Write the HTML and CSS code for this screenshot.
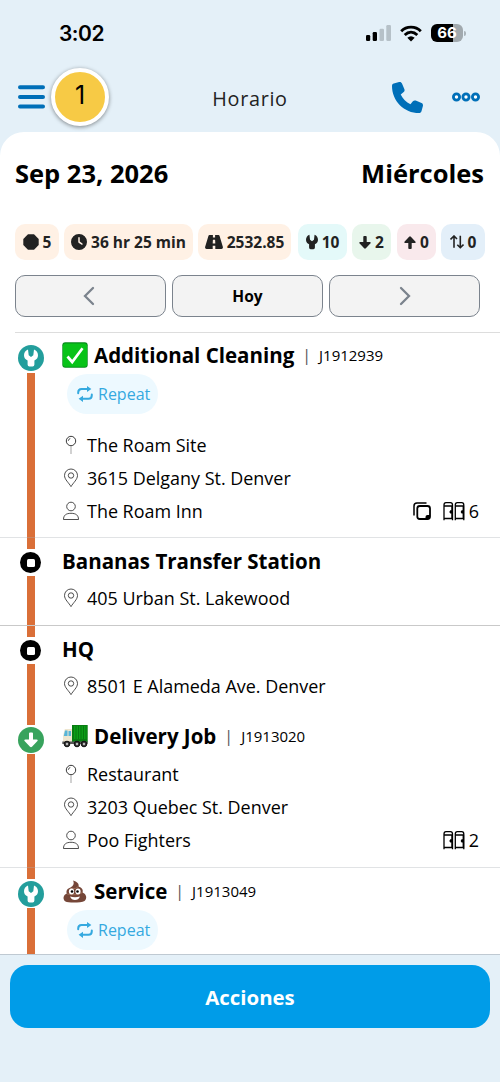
FILE: index.html
```html
<!DOCTYPE html>
<html lang="es">
<head>
<meta charset="utf-8">
<title>Horario</title>
<link rel="stylesheet" href="styles.css">
</head>
<body>
<svg class="defs" width="0" height="0" aria-hidden="true">
  <symbol id="wrench" viewBox="0 0 14 18"><path d="M4 .6 4.700 6.300 7 8 9.300 6.300 10 .6C12.600 1.600 14 3.900 14 6.300 14 8.800 12.700 10.500 10.400 11.600V15.500Q10.400 17.500 8.600 17.500H5.400Q3.600 17.500 3.600 15.500V11.600C1.300 10.500 0 8.800 0 6.300 0 3.900 1.400 1.600 4 .6Z"/></symbol>
  <symbol id="down" viewBox="0 0 14 16"><path d="M5 1.500Q5 .5 6 .5H8Q9 .5 9 1.500V7.500H12.500Q14.500 7.600 13.200 9.300L8 14.800Q7 15.700 6 14.800L.8 9.300Q-.5 7.600 1.500 7.500H5Z"/></symbol>
  <symbol id="pin" viewBox="0 0 16 20"><g fill="none" stroke="#222" stroke-width=".9"><circle cx="8" cy="6" r="4.700"/><path d="M5.300 5.800Q5.500 3.900 7.300 3.500" stroke-width=".8"/><path d="M8 10.800V19" stroke="#999"/></g></symbol>
  <symbol id="place" viewBox="0 0 16 20"><g fill="none" stroke="#222" stroke-width=".8"><path d="M8 18.600C6 15 1.500 11.500 1.500 7.500A6.500 6.500 0 0 1 14.500 7.500C14.500 11.500 10 15 8 18.600Z"/><circle cx="8" cy="7.500" r="2.700"/></g></symbol>
  <symbol id="person" viewBox="0 0 16 20"><g fill="none" stroke="#222" stroke-width=".8"><circle cx="8" cy="5.500" r="4.300"/><path d="M.5 18.500C.5 14.300 3 12.300 8 12.300S15.500 14.300 15.500 18.500Z"/></g></symbol>
  <symbol id="repeat" viewBox="0 0 16 16"><g fill="none" stroke="currentColor" stroke-width="2" stroke-linecap="round"><path d="M1.200 7.300V6.500Q1.200 3 4.500 3H11"/><path d="M14.800 8.500V9.300Q14.800 12.800 11.500 12.800H5"/></g><path fill="currentColor" d="M10 0 14.400 3 10 6ZM6 9.800 1.600 12.800 6 15.900Z"/></symbol>
  <symbol id="units" viewBox="0 0 22 20"><g id="unit"><path fill="none" stroke="#000" stroke-width="1.300" d="M1 19.200V4Q1 1.600 3 1.600H7.500Q9.500 1.600 9.500 4V19.200M1 5H9.500M1 17.500H9.500"/><path d="M7.300 9.200H9V12.600H7.300L6.300 10.900ZM8.300 5H9.800V18H8.300Z"/></g><use href="#unit" x="11.300"/></symbol>
</svg>

<div class="screen">
  <header class="top">
    <div class="status">
      <span class="time">3:02</span>
      <svg class="signal" width="26" height="18" viewBox="0 0 26 18"><rect x="0" y="11" width="4.200" height="6" rx="1.200"/><rect x="6.700" y="8" width="4.300" height="9" rx="1.200"/><g fill="#b6c1c8"><rect x="13.500" y="4.700" width="4.500" height="12.300" rx="1.200"/><rect x="20.300" y="1" width="4.700" height="16" rx="1.200"/></g></svg>
      <svg class="wifi" width="22" height="17" viewBox="0 0 22 17"><g fill="none" stroke="#000" stroke-width="2.800"><path d="M1.200 6.200C6.500.8 15.500.8 20.800 6.200"/><path d="M4.700 10C8.500 6.300 13.500 6.300 17.300 10"/></g><path d="M7.300 12.800Q11 9.800 14.700 12.800L11 16.500Z"/></svg>
      <span class="battery">66</span><i class="nub"></i>
    </div>
    <nav class="nav">
      <svg class="menu" width="27" height="24" viewBox="0 0 27 24"><path d="M2 2.300H25M2 12H25M2 21.500H25" stroke="#006fb8" stroke-width="4" stroke-linecap="round"/></svg>
      <span class="count">1</span>
      <h1>Horario</h1>
      <svg class="phone" width="31" height="31" viewBox="0 0 512 512"><path fill="#006fb8" d="M164.900 24.600c-7.700-18.600-28-28.500-47.400-23.200l-88 24C12.100 30.200 0 46 0 64C0 311.400 200.600 512 448 512c18 0 33.800-12.100 38.600-29.500l24-88c5.300-19.400-4.600-39.700-23.200-47.400l-96-40c-16.300-6.800-35.200-2.100-46.300 11.600L304.700 368C234.300 334.700 177.300 277.700 144 207.300L193.300 167c13.700-11.200 18.400-30 11.600-46.300l-40-96z"/></svg>
      <svg class="more" width="28" height="10" viewBox="0 0 28 10"><g fill="#fff" stroke="#006fb8" stroke-width="2.800"><circle cx="4.500" cy="5" r="3.100"/><circle cx="14" cy="5" r="3.100"/><circle cx="23.500" cy="5" r="3.100"/></g></svg>
    </nav>
  </header>

  <main class="panel">
    <div class="date"><span>Sep 23, 2026</span><span>Miércoles</span></div>
    <div class="chips">
      <span class="chip c-stops"><svg width="16" height="16" viewBox="0 0 16 16"><path d="M5 .3H11L15.700 5V11L11 15.700H5L.3 11V5Z"/></svg>5</span>
      <span class="chip c-time"><svg width="16" height="16" viewBox="0 0 512 512"><path fill-rule="evenodd" d="M256 0a256 256 0 1 1 0 512A256 256 0 1 1 256 0zM232 120V256c0 8 4 15.500 10.700 20l96 64c11 7.400 25.900 4.400 33.300-6.700s4.400-25.900-6.700-33.300L280 243.200V120c0-13.300-10.700-24-24-24s-24 10.700-24 24z"/></svg>36 hr 25 min</span>
      <span class="chip c-road"><svg width="18" height="16" viewBox="0 0 18 16"><path fill-rule="evenodd" d="M4.500 1H7.900V3.500H10.100V1H13.500Q14.300 1 14.600 2L17.900 13Q18.200 15 16.500 15H10.300V11.800H7.700V15H1.500Q-.2 15 .1 13L3.400 2Q3.700 1 4.500 1ZM7.900 5.800 7.700 9.500H10.300L10.100 5.800Z"/></svg>2532.85</span>
      <span class="chip c-service"><svg width="12" height="16"><use href="#wrench"/></svg>10</span>
      <span class="chip c-down"><svg width="12" height="15"><use href="#down"/></svg>2</span>
      <span class="chip c-up"><svg class="flip" width="12" height="15"><use href="#down"/></svg>0</span>
      <span class="chip c-swap"><svg width="14" height="14" viewBox="0 0 14 14"><path fill="none" stroke="#222" stroke-width="1.600" d="M.5 4.500 4 1 7 4M4 1V12.700M7.300 9.700 10.300 12.700 13.500 9.500M10.300 12.700V.8"/></svg>0</span>
    </div>
    <div class="days">
      <button><svg class="prev" width="12" height="20" viewBox="0 0 12 20"><path d="M10 2 2 10 10 18"/></svg></button>
      <button>Hoy</button>
      <button><svg width="12" height="20" viewBox="0 0 12 20"><path d="M2 2 10 10 2 18"/></svg></button>
    </div>

    <section class="stops">
      <article class="stop first line">
        <div class="rail"><i class="seg lead"></i><span class="dot teal"><svg width="14" height="18"><use href="#wrench"/></svg></span><i class="seg"></i></div>
        <div class="body">
          <h2><svg class="emoji" width="26" height="26" viewBox="0 0 26 26"><rect x=".3" y=".3" width="25.400" height="25.400" rx="3" fill="#078c1b"/><rect x="1" y="1.500" width="24" height="23.200" rx="2.500" fill="#08c318"/><path d="M5.500 14.500 10.200 20 20.500 6.300" fill="none" stroke="#fff" stroke-width="2.700"/></svg>Additional Cleaning<span class="bar">|</span><small>J1912939</small></h2>
          <span class="tag"><svg width="16" height="16"><use href="#repeat"/></svg>Repeat</span>
          <p><svg width="16" height="20"><use href="#pin"/></svg>The Roam Site</p>
          <p><svg width="16" height="20"><use href="#place"/></svg>3615 Delgany St. Denver</p>
          <p><svg width="16" height="20"><use href="#person"/></svg>The Roam Inn<span class="qty"><svg class="copy" width="18" height="18" viewBox="0 0 18 18"><g fill="none" stroke="#000" stroke-width="1.500"><path d="M1 13.500V4Q1 1 4 1H13.500"/><rect x="4.300" y="4" width="12.700" height="13" rx="2.500" stroke-width="1.800"/></g><path d="M12.500 17V15Q12.500 13 14.500 13H17V15.500L15.500 17Z"/></svg><svg width="22" height="20"><use href="#units"/></svg>6</span></p>
        </div>
      </article>
      <article class="stop line strong">
        <div class="rail"><i class="seg lead"></i><span class="dot small"><i></i></span><i class="seg"></i></div>
        <div class="body"><h2>Bananas Transfer Station</h2><p><svg width="16" height="20"><use href="#place"/></svg>405 Urban St. Lakewood</p></div>
      </article>
      <article class="stop">
        <div class="rail"><i class="seg lead"></i><span class="dot small"><i></i></span><i class="seg"></i></div>
        <div class="body"><h2>HQ</h2><p><svg width="16" height="20"><use href="#place"/></svg>8501 E Alameda Ave. Denver</p></div>
      </article>
      <article class="stop delivery line">
        <div class="rail"><i class="seg lead"></i><span class="dot green"><svg width="14" height="16"><use href="#down"/></svg></span><i class="seg"></i></div>
        <div class="body">
          <h2><svg class="emoji" width="26" height="24" viewBox="0 0 26 24"><path fill="#087d12" d="M10 1H25.700V18.500H10Z"/><path fill="#0b9d17" d="M12 2H25V15H12Z"/><path d="M14 2V15M16.500 2V15M19 2V15M21.500 2V15M24 2V15" stroke="#056a0d" stroke-width=".7"/><path fill="#eee6cf" d="M2.800 5H10V19H1V12Z"/><path fill="#58b5d8" d="M3 6.500H5.500V12H1.800ZM6.500 7H9V12H6.500Z"/><path fill="#555" d="M.3 17.500H25.700V20H.3Z"/><g fill="#333" stroke="#111"><circle cx="5" cy="20" r="2.800"/><circle cx="15" cy="20" r="2.800"/><circle cx="22" cy="20" r="2.800"/></g><g fill="#bbb"><circle cx="5" cy="20" r="1.200"/><circle cx="15" cy="20" r="1.200"/><circle cx="22" cy="20" r="1.200"/></g></svg>Delivery Job<span class="bar">|</span><small>J1913020</small></h2>
          <p><svg width="16" height="20"><use href="#pin"/></svg>Restaurant</p>
          <p><svg width="16" height="20"><use href="#place"/></svg>3203 Quebec St. Denver</p>
          <p><svg width="16" height="20"><use href="#person"/></svg>Poo Fighters<span class="qty"><svg width="22" height="20"><use href="#units"/></svg>2</span></p>
        </div>
      </article>
      <article class="stop">
        <div class="rail"><i class="seg lead"></i><span class="dot teal"><svg width="14" height="18"><use href="#wrench"/></svg></span><i class="seg"></i></div>
        <div class="body">
          <h2><svg class="emoji" width="26" height="26" viewBox="0 0 26 26"><path fill="#754638" d="M11 2.500C15 3.500 17.500 6 16.500 8.500 20 9.500 21.500 12 20.500 14.500 24.500 16 25.500 20.500 22.500 23 19 25 6 25 3.500 23.500.5 21.500 1 17 4.800 15.500 3.800 12.500 5.500 10.500 8.500 9.500 11.500 8 12.500 5 11 2.500Z"/><path d="M8.500 10.500Q14 11.500 16.500 8.500M5 16Q14 18 20.500 14.500" stroke="#9b6b55" fill="none"/><ellipse cx="9.500" cy="13.500" rx="2.600" ry="3" fill="#fff"/><ellipse cx="16" cy="13.500" rx="2.600" ry="3" fill="#fff"/><circle cx="10" cy="13.500" r="1.300"/><circle cx="15.500" cy="13.500" r="1.300"/><path d="M8 18.500Q13 20 18 18.500 16.500 22 13 22T8 18.500Z" fill="#fff"/></svg>Service<span class="bar">|</span><small>J1913049</small></h2>
          <span class="tag"><svg width="16" height="16"><use href="#repeat"/></svg>Repeat</span>
        </div>
      </article>
    </section>
  </main>

  <footer class="foot"><button class="action">Acciones</button></footer>
</div>
</body>
</html>
```
FILE: styles.css
```css
* { box-sizing: border-box; }
body { margin: 0; font-family: "Open Sans", "Noto Sans", sans-serif; color: #000; }
svg { display: block; flex: none; }
.defs { position: absolute; }
.screen { width: 500px; height: 1082px; display: flex; flex-direction: column; overflow: hidden; background: #e4f0f8; }
.top { height: 132px; flex: none; }
.status { height: 66px; display: flex; align-items: center; padding: 0 34px 0 59px; font-family: Inter, sans-serif; }
.time { font-size: 21px; font-weight: 600; letter-spacing: -.5px; margin-right: auto; }
.signal { margin-right: 8px; }
.wifi { margin-right: 9px; }
.battery { width: 32px; height: 18px; border-radius: 6px; background: linear-gradient(90deg, #000 68%, #a1a9ae 68%); color: #fff; font-size: 15px; font-weight: 700; line-height: 18px; text-align: center; }
.nub { width: 2px; height: 5px; margin-left: 1px; border-radius: 0 2px 2px 0; background: #a9b3b9; }
.nav { height: 66px; display: flex; align-items: center; padding: 0 20px 4px 18px; }
.count { width: 58px; height: 58px; margin-left: 6px; border: 4px solid #fff; border-radius: 50%; background: #f7ca45; box-shadow: 0 1px 4px rgba(0,0,0,.45); font: 25px/46px Inter, sans-serif; text-align: center; }
.nav h1 { flex: 1; margin: 2px 0 0; padding-right: 1px; font-size: 19.800px; font-weight: 400; letter-spacing: .7px; color: #222; text-align: center; }
.phone { margin-right: 29px; }
.more { margin-top: -1px; }
.panel { flex: 1; min-height: 0; overflow: hidden; background: #fff; border-radius: 24px 24px 0 0; }
.date { display: flex; justify-content: space-between; padding: 0 16px 0 15px; height: 92px; line-height: 82px; font-size: 25.500px; font-weight: 700; }
.chips { display: flex; padding-left: 15px; height: 36px; }
.chip { display: flex; align-items: center; justify-content: center; gap: 4px; border-radius: 10px; font-size: 15.500px; font-weight: 700; color: #222; fill: #222; }
.c-stops { width: 44px; margin-right: 5px; background: #fff1e5; }
.c-time { width: 129px; margin-right: 5px; background: #fff1e5; }
.c-road { width: 93px; margin-right: 7px; background: #fff1e5; }
.c-service { width: 49px; margin-right: 5px; background: #e4f9f9; }
.c-down { width: 39px; margin-right: 6px; background: #e8f6ec; }
.c-up { width: 39px; margin-right: 5px; background: #f9e9ec; }
.c-swap { width: 44px; background: #e3eff9; }
.flip { transform: rotate(180deg); }
.days { display: grid; grid-template-columns: repeat(3, 151px); gap: 6px; padding: 15px 0 15px 15px; }
.days button { display: flex; align-items: center; justify-content: center; height: 42px; padding: 0; border: 1.500px solid #7b838d; border-radius: 10px; background: #f3f3f3; font: 700 15.500px "Open Sans", sans-serif; color: #000; }
.days path { fill: none; stroke: #7b838d; stroke-width: 2.300; stroke-linecap: round; }
.prev { margin-right: 3px; }
.stop { position: relative; display: flex; height: 88px; }
.stop.first { height: 206px; }
.stop.delivery { height: 154px; }
.stop.line::after { content: ""; position: absolute; left: 0; right: 0; bottom: 0; height: 1px; background: rgba(170,175,180,.35); }
.stop.strong::after { background: #c9c9c9; }
.stop.first::before { content: ""; position: absolute; left: 15px; right: 0; top: 0; height: 1px; background: #ddd; }
.rail { width: 62px; flex: none; display: flex; flex-direction: column; align-items: center; padding-right: 1px; }
.seg { width: 8px; flex: 1; background: #da6f38; }
.seg.lead { flex: none; height: 11px; }
.first .seg.lead { height: 11.500px; background: none; }
.dot { width: 26px; height: 26px; margin: 1.500px 0; display: grid; place-items: center; border-radius: 50%; fill: #fff; }
.teal { background: #239e9c; }
.green { background: #38a35d; }
.small { width: 21px; height: 21px; margin: 3px 0; background: #000; }
.small i { width: 8px; height: 8px; border-radius: 1.500px; background: #fff; }
.body { flex: 1; padding: 4px 21px 0 0; }
.body h2 { display: flex; align-items: center; height: 37px; margin: 0 0 2px; font-size: 20.500px; font-weight: 700; white-space: nowrap; }
.emoji { margin-right: 6px; }
.bar { margin: 0 8px; font-size: 16px; font-weight: 400; color: #555; }
.body small { font-size: 15px; font-weight: 400; }
.body p { display: flex; align-items: center; height: 33.300px; margin: 0; padding-left: 1px; font-size: 17.950px; }
.body p > svg { margin-right: 8px; }
.tag { display: flex; align-items: center; gap: 5px; width: 91px; height: 40px; margin: -1px 0 14px 5px; padding-left: 10px; border-radius: 20px; background: #edf9ff; color: #35a9df; font-size: 16px; }
.stop:not(.first) .body p { margin-top: 1px; margin-bottom: -1px; }
.delivery .body { padding-top: 3px; }
.delivery .body h2 { margin-bottom: 3px; }
.qty { display: flex; align-items: center; margin-left: auto; gap: 4px; }
.copy { margin-right: 8px; }
.foot { height: 128px; flex: none; padding: 10px; border-top: 1px solid #bfc9d2; }
.action { width: 480px; height: 63px; border: 0; border-radius: 18px; background: #009ce8; color: #fff; font: 700 20.400px "Open Sans", sans-serif; }
```
